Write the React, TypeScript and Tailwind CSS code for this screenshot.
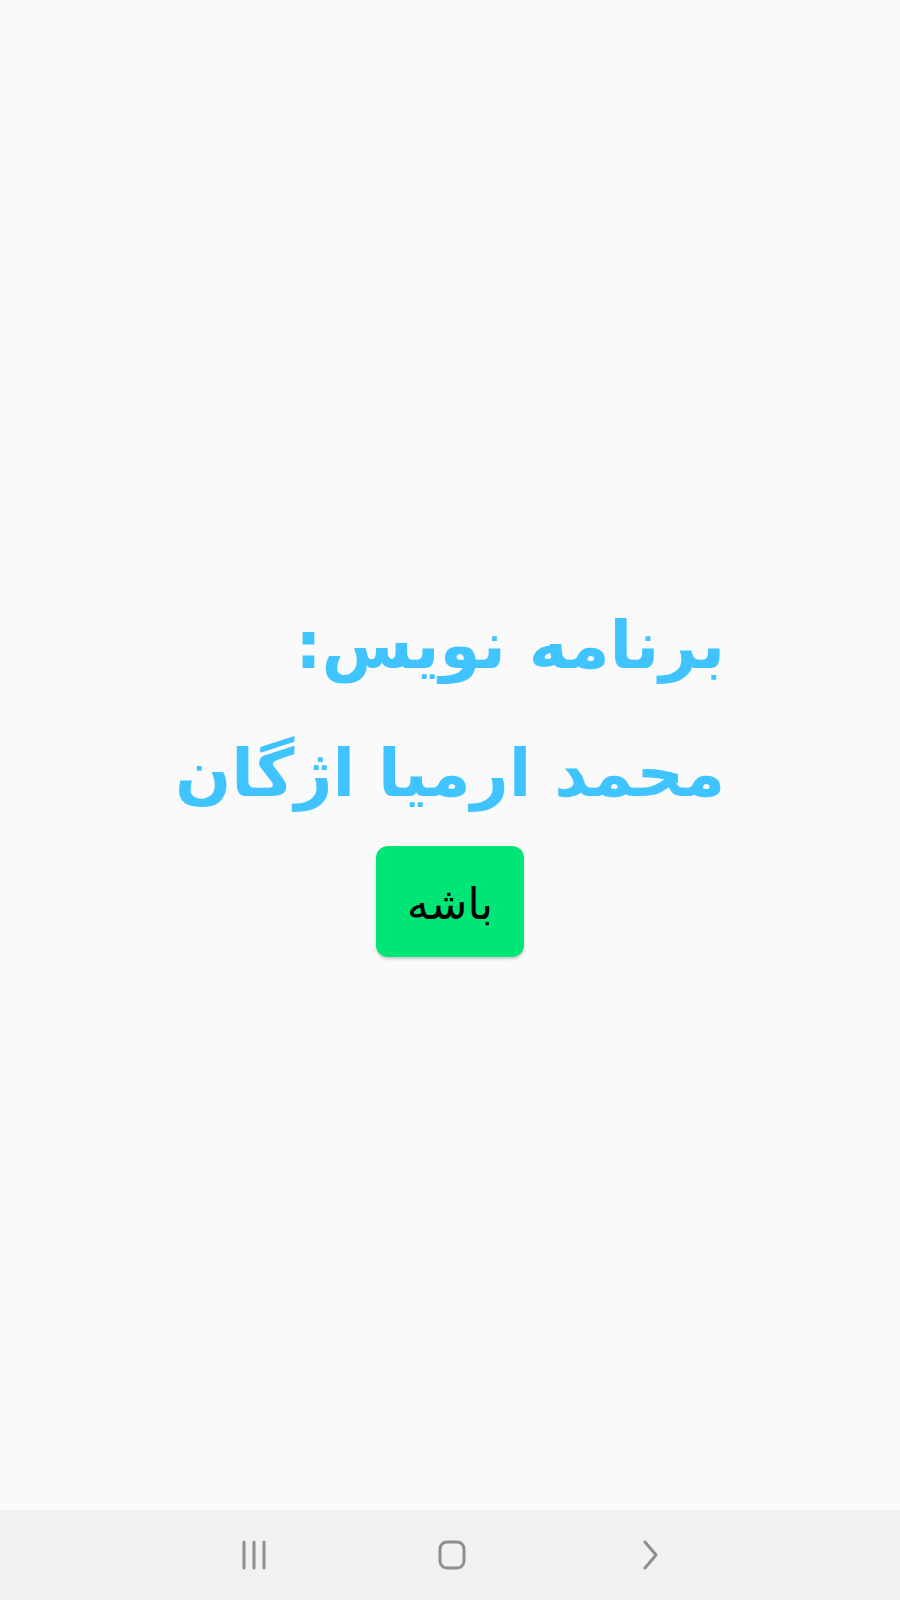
export default function App() {
  return (
    <div className="flex min-h-[1600px] w-full flex-col bg-[#fafafa]" style={{ fontFamily: '"DejaVu Sans", sans-serif' }}>
      {/* main content */}
      <div className="flex flex-1 flex-col items-center justify-center pt-[29px]">
        <div dir="rtl" className="w-fit text-right text-[66px] font-bold leading-[128px] text-[#40c4ff]">
          <div>برنامه نویس:</div>
          <div>محمد ارمیا اژگان</div>
        </div>
        <button className="mt-[8px] flex h-[111px] w-[148px] items-center justify-center rounded-[12px] bg-[#00e676] pt-[4px] text-[44px] text-black shadow-[0_2px_3px_rgba(0,0,0,0.2)]">
          باشه
        </button>
      </div>

      {/* android nav bar */}
      <div className="flex h-[90px] items-center justify-center bg-[#f1f1f1]">
        <div className="flex w-full items-center justify-center">
          <svg width="28" height="30" viewBox="0 0 28 30" className="ml-[-2px]">
            <g stroke="#8e8e8e" strokeWidth="3" strokeLinecap="round">
              <line x1="4" y1="2" x2="4" y2="28" />
              <line x1="14" y1="2" x2="14" y2="28" />
              <line x1="24" y1="2" x2="24" y2="28" />
            </g>
          </svg>
          <svg width="28" height="30" viewBox="0 0 28 30" className="ml-[170px]">
            <rect x="2" y="2" width="24" height="26" rx="7" fill="none" stroke="#8e8e8e" strokeWidth="3" />
          </svg>
          <svg width="16" height="30" viewBox="0 0 16 30" className="ml-[177px]">
            <polyline points="2,2 13,15 2,28" fill="none" stroke="#8e8e8e" strokeWidth="3" strokeLinecap="round" strokeLinejoin="round" />
          </svg>
        </div>
      </div>
    </div>
  );
}
